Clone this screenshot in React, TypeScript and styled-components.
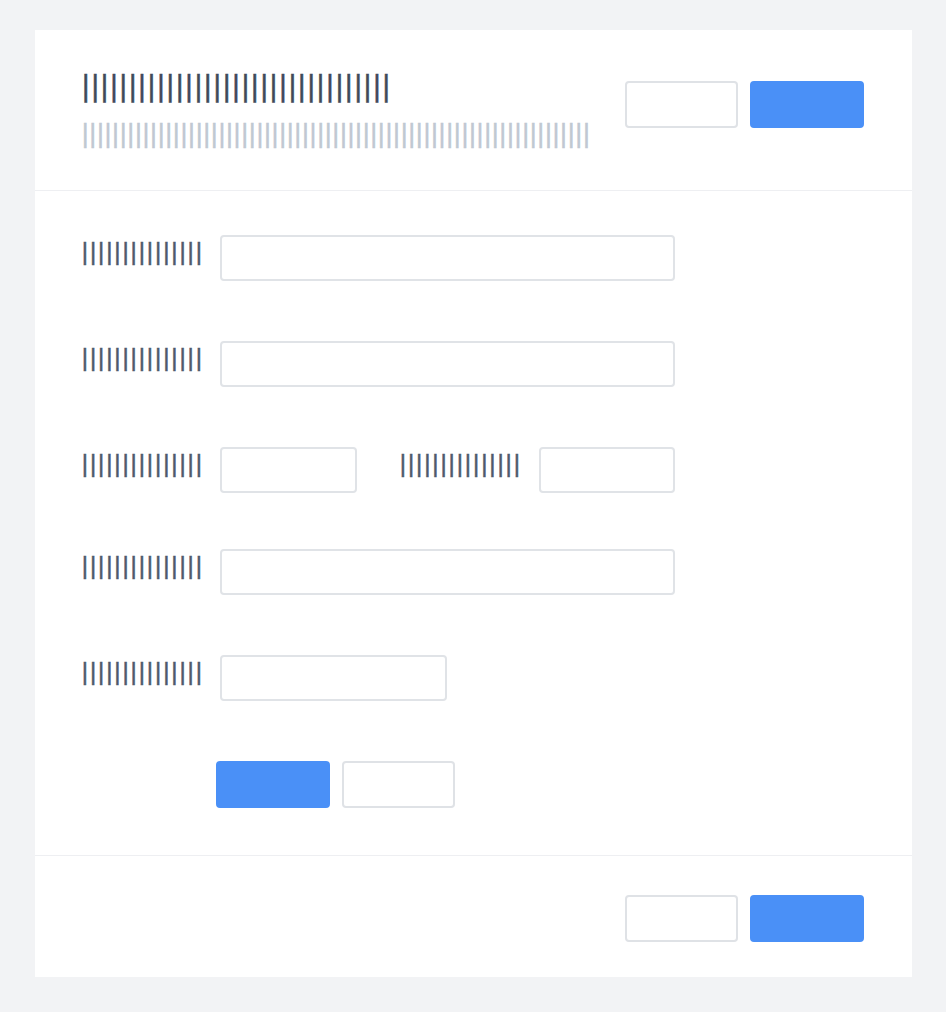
import React from "react";
import styled, { createGlobalStyle } from "styled-components";

const Global = createGlobalStyle`
  html, body { margin: 0; padding: 0; background: #f2f3f5; }
  body { font-family: "DejaVu Sans", sans-serif; }
  * { box-sizing: border-box; }
`;

const Page = styled.div`
  padding: 30px 34px 35px 35px;
  min-height: 1012px;
`;

const Card = styled.div`
  background: #ffffff;
  display: flex;
  flex-direction: column;
`;

const Header = styled.header`
  display: flex;
  justify-content: space-between;
  align-items: flex-start;
  padding: 43px 48px 44px 46px;
  border-bottom: 1px solid #eeeff2;
`;

const TitleBlock = styled.div`
  display: flex;
  flex-direction: column;
  gap: 20px;
`;

const Bars = styled.div<{ $size: number; $spacing: number; $color: string }>`
  font-family: "DejaVu Sans", sans-serif;
  font-size: ${(p) => p.$size}px;
  line-height: 1;
  height: ${(p) => p.$size}px;
  letter-spacing: ${(p) => p.$spacing}px;
  color: ${(p) => p.$color};
  -webkit-text-stroke: 0.5px ${(p) => p.$color};
  white-space: nowrap;
`;

const Actions = styled.div<{ $offset?: number }>`
  display: flex;
  gap: 12px;
  margin-top: ${(p) => p.$offset ?? 0}px;
`;

const Button = styled.button<{ $primary?: boolean }>`
  width: ${(p) => (p.$primary ? 114 : 113)}px;
  height: 47px;
  border-radius: 4px;
  padding: 0;
  border: 2px solid ${(p) => (p.$primary ? "#4a90f7" : "#dfe2e6")};
  background: ${(p) => (p.$primary ? "#4a90f7" : "#ffffff")};
  cursor: pointer;
`;

const Body = styled.section`
  display: flex;
  flex-direction: column;
  padding: 44px 48px 47px 46px;
  border-bottom: 1px solid #eeeff2;
`;

const Row = styled.div<{ $gap?: number }>`
  display: flex;
  align-items: flex-start;
  margin-bottom: ${(p) => p.$gap ?? 60}px;
`;

const Label = styled.label<{ $width?: number; $indent?: number }>`
  width: ${(p) => p.$width ?? 139}px;
  margin-left: ${(p) => p.$indent ?? 0}px;
  padding-top: 6px;
  flex: none;
`;

const Input = styled.input<{ $width: number }>`
  width: ${(p) => p.$width}px;
  height: 46px;
  border: 2px solid #e0e3e7;
  border-radius: 4px;
  background: #fff;
  padding: 0 10px;
  flex: none;
`;

const FormActions = styled.div`
  display: flex;
  gap: 12px;
  margin-left: 135px;
`;

const Footer = styled.footer`
  display: flex;
  justify-content: flex-end;
  padding: 39px 48px 35px 46px;
`;

const labelBars = "|".repeat(15);

const FieldLabel: React.FC<{ width?: number; indent?: number }> = ({ width, indent }) => (
  <Label $width={width} $indent={indent}>
    <Bars $size={23} $spacing={0.39} $color="#4d596b">
      {labelBars}
    </Bars>
  </Label>
);

export default function App() {
  return (
    <>
      <Global />
      <Page>
        <Card>
          <Header>
            <TitleBlock>
              <Bars $size={28} $spacing={-0.04} $color="#3f4a5a">
                {"|".repeat(33)}
              </Bars>
              <Bars $size={25} $spacing={-0.83} $color="#c0c8d2">
                {"|".repeat(67)}
              </Bars>
            </TitleBlock>
            <Actions $offset={8}>
              <Button />
              <Button $primary />
            </Actions>
          </Header>
          <Body>
            <Row>
              <FieldLabel />
              <Input $width={455} />
            </Row>
            <Row>
              <FieldLabel />
              <Input $width={455} />
            </Row>
            <Row $gap={56}>
              <FieldLabel />
              <Input $width={137} />
              <FieldLabel width={140} indent={42} />
              <Input $width={136} />
            </Row>
            <Row>
              <FieldLabel />
              <Input $width={455} />
            </Row>
            <Row>
              <FieldLabel />
              <Input $width={227} />
            </Row>
            <FormActions>
              <Button $primary />
              <Button />
            </FormActions>
          </Body>
          <Footer>
            <Actions>
              <Button />
              <Button $primary />
            </Actions>
          </Footer>
        </Card>
      </Page>
    </>
  );
}
